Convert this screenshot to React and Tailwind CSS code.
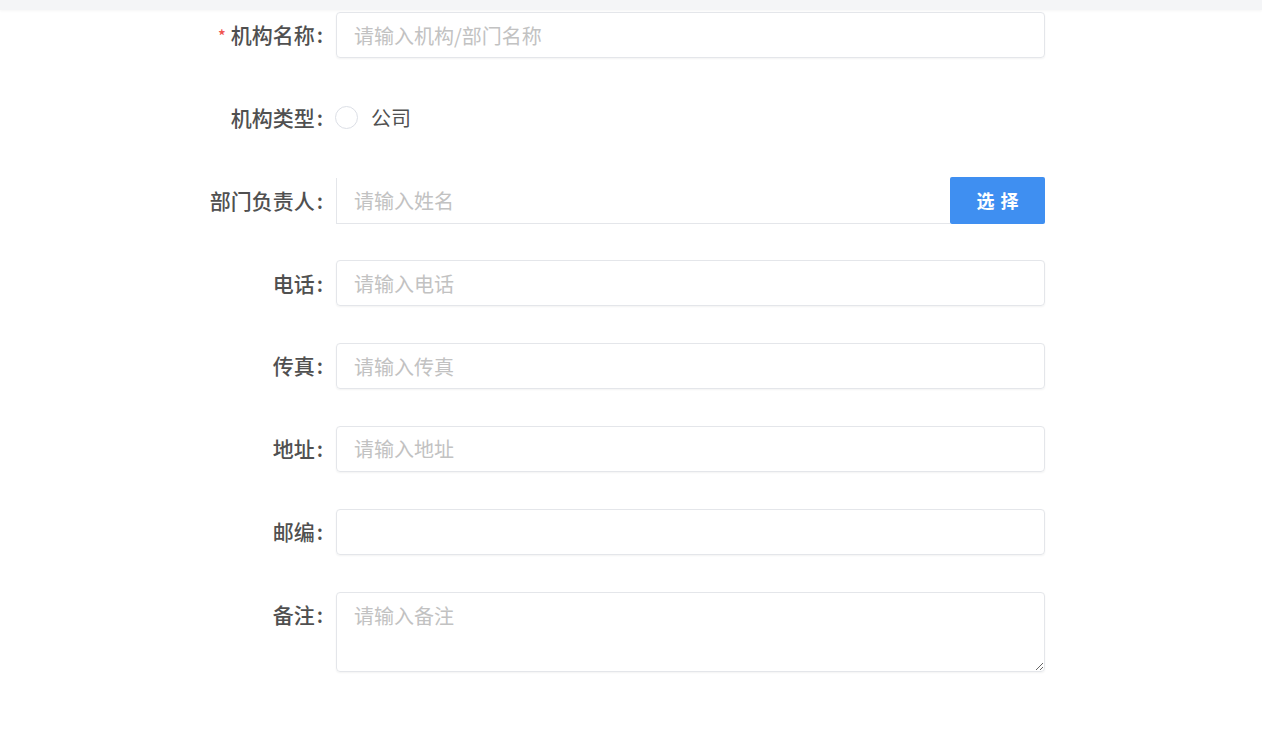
import React from "react";

const font = { fontFamily: '"Noto Sans CJK SC", "Noto Sans", sans-serif' };

const Label = ({ text, required }) => (
    <div className="w-[336px] shrink-0 pr-[13px] flex justify-end items-center text-[21px] text-[#505050] font-medium">
        {required && <span className="text-[#f0534f] mr-[5px] text-[16px]">*</span>}
        <span>{text}</span>
        <span className="ml-[2px]">:</span>
    </div>
);

const Field = ({ placeholder }) => (
    <input
        className="w-[709px] h-[46px] rounded-[4px] border border-[#e4e6ea] shadow-[0_1px_2px_rgba(0,0,0,0.05)] px-[17px] text-[20px] text-[#333] placeholder:text-[#c2c2c2] outline-none"
        placeholder={placeholder}
    />
);

const rows = [
    { label: "电话", placeholder: "请输入电话" },
    { label: "传真", placeholder: "请输入传真" },
    { label: "地址", placeholder: "请输入地址" },
    { label: "邮编", placeholder: "" },
];

const App = () => {
    return (
        <div className="w-[1262px] h-[750px] bg-white overflow-hidden" style={font}>
            <div className="h-[10px] bg-[#f4f5f7] shadow-[0_1px_3px_rgba(0,0,0,0.04)]"></div>
            <div className="flex flex-col gap-[36.8px] pt-[2px]">
                <div className="flex items-center">
                    <Label text="机构名称" required />
                    <Field placeholder="请输入机构/部门名称" />
                </div>
                <div className="flex items-center h-[46px]">
                    <Label text="机构类型" />
                    <span className="-ml-[1px] w-[23px] h-[23px] rounded-full border border-[#dcdfe6] bg-white"></span>
                    <span className="ml-[13px] text-[20px] text-[#505050]">公司</span>
                </div>
                <div className="flex items-center">
                    <Label text="部门负责人" />
                    <div className="w-[709px] h-[46px] flex">
                        <input
                            className="flex-1 h-full border-l border-b border-[#e4e6ea] px-[17px] text-[20px] placeholder:text-[#c2c2c2] outline-none"
                            placeholder="请输入姓名"
                        />
                        <button className="w-[95px] h-[47px] -mt-[1px] bg-[#3f8ff1] rounded-[2px] text-white text-[18px] font-bold tracking-[6px] pl-[6px]">
                            选择
                        </button>
                    </div>
                </div>
                {rows.map((r) => (
                    <div key={r.label} className="flex items-center">
                        <Label text={r.label} />
                        <Field placeholder={r.placeholder} />
                    </div>
                ))}
                <div className="flex items-start">
                    <div className="h-[46px] flex">
                        <Label text="备注" />
                    </div>
                    <textarea
                        className="w-[709px] h-[80px] rounded-[4px] border border-[#e4e6ea] shadow-[0_1px_2px_rgba(0,0,0,0.05)] px-[17px] py-[10px] text-[20px] leading-[26px] placeholder:text-[#c2c2c2] outline-none resize-y"
                        placeholder="请输入备注"
                    />
                </div>
            </div>
        </div>
    );
};

export default App;
